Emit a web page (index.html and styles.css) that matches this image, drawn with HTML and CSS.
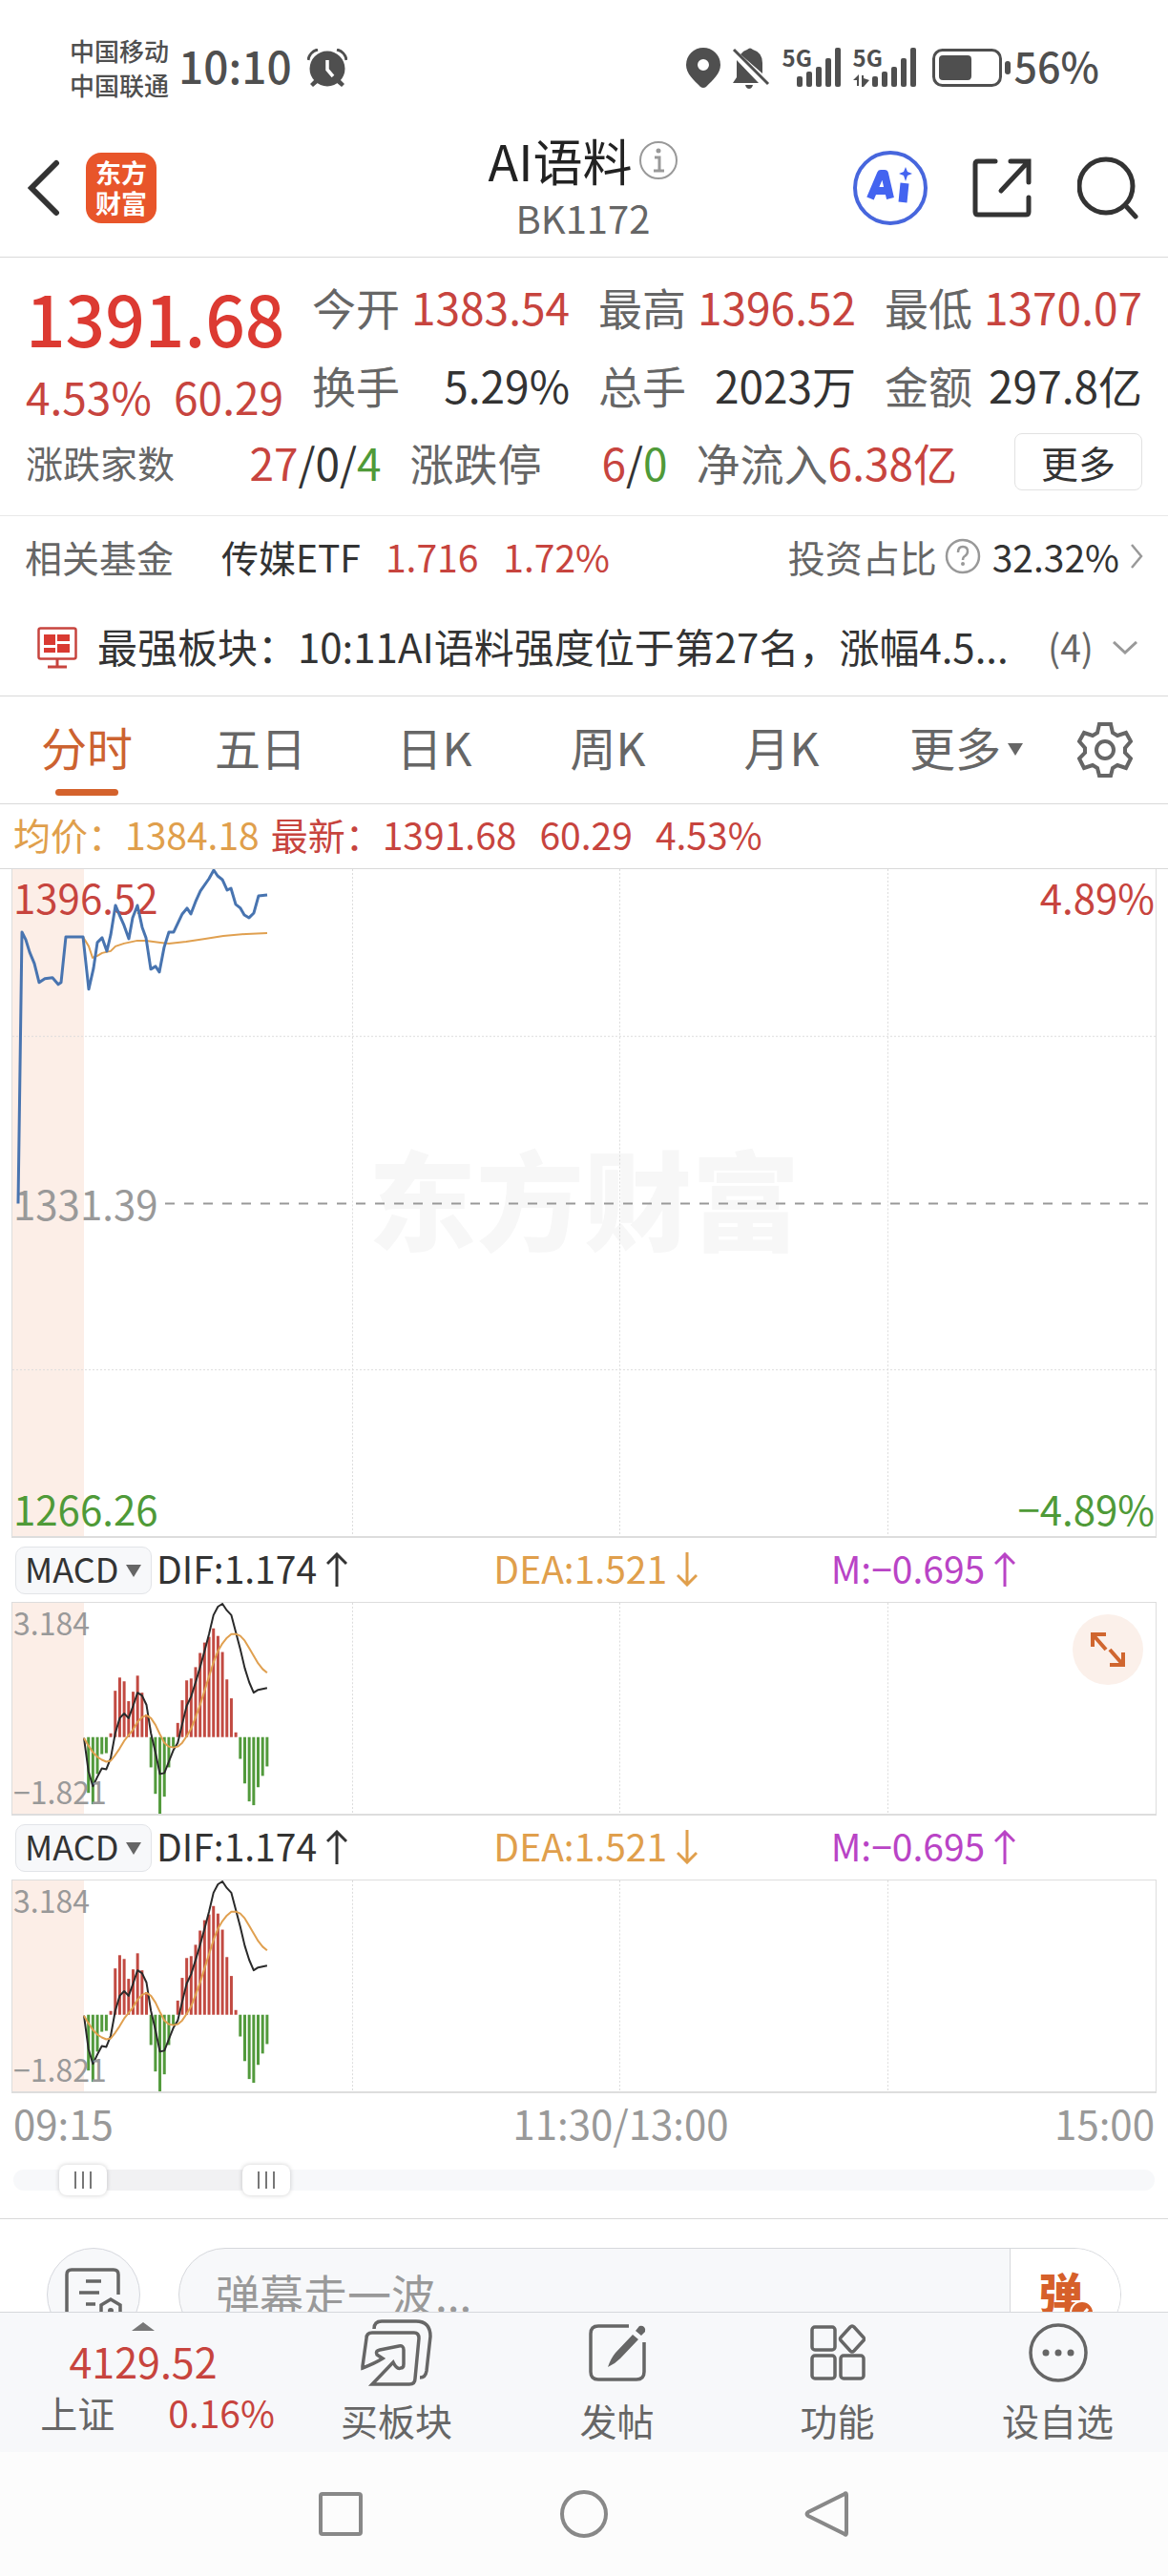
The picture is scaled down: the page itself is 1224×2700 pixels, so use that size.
FILE: index.html
```
<!DOCTYPE html>
<html lang="zh-CN">
<head>
  <meta charset="UTF-8" />
  <meta name="viewport" content="width=device-width, initial-scale=1.0"/>
  <title>AI语料 BK1172</title>
  <link rel="stylesheet" href="styles.css">
</head>
<body>
  <div class="status-bar">
    <div class="carriers">
      <span>中国移动</span>
      <span>中国联通</span>
    </div>
    <span class="clock">10:10</span>
    <svg class="alarm" width="42" height="40" viewBox="0 0 42 40" fill="#4f4f4f">
      <path d="M8 32l-5 5 3 3 6-5zM34 32l5 5-3 3-6-5z"/>
      <circle cx="21" cy="21" r="18.500"/>
      <path d="M1 12A13 13 0 0 1 11 1M41 12A13 13 0 0 0 31 1" fill="none" stroke="#4f4f4f" stroke-width="3"/>
      <path d="M21 12v10l6 7" fill="none" stroke="#fff" stroke-width="3.500"/>
    </svg>
    <div class="status-icons">
      <svg width="36" height="42" viewBox="0 0 36 42" fill="#4f4f4f">
        <path fill-rule="evenodd" d="M18 0a18 18 0 0 1 18 18c0 9-8 16-15 23q-3 2-6 0C8 34 0 27 0 18A18 18 0 0 1 18 0zM18 12a6 6 0 1 0 0 12 6 6 0 0 0 0-12z"/>
      </svg>
      <svg class="bell" width="40" height="43" viewBox="0 0 40 43" fill="#4f4f4f">
        <path d="M5 13L28 37H1l4-6zM9 7q3-4 7-5 3-3 6 0 10 3 10 14v11z"/>
        <path d="M2 2L38 38" stroke="#4f4f4f" stroke-width="3"/>
        <path d="M14 39h8q-1 4-4 4t-4-4z"/>
      </svg>
      <span class="signal">
        <b>5G</b>
        <svg width="62" height="42" viewBox="0 0 62 42" fill="#4f4f4f">
          <rect x="15" y="30" width="6" height="11" rx="2"/><rect x="25" y="25" width="6" height="16" rx="2"/><rect x="35" y="20" width="6" height="21" rx="2"/><rect x="45" y="11" width="6" height="30" rx="2"/><rect x="55" y="0" width="6" height="41" rx="2"/>
        </svg>
      </span>
      <span class="signal">
        <b>5G</b>
        <svg width="67" height="42" viewBox="0 0 67 42" fill="#4f4f4f">
          <path d="M6 28v12H4v-6H0zM9 29h2v3l6 2-6 7H9z"/>
          <rect x="20" y="30" width="6" height="11" rx="2"/><rect x="30" y="25" width="6" height="16" rx="2"/><rect x="40" y="20" width="6" height="21" rx="2"/><rect x="50" y="11" width="6" height="30" rx="2"/><rect x="60" y="0" width="6" height="41" rx="2"/>
        </svg>
      </span>
      <svg class="battery" width="82" height="40" viewBox="0 0 82 40" fill="#4f4f4f">
        <rect x="1.500" y="1.500" width="70" height="37" rx="9" fill="none" stroke="#4f4f4f" stroke-width="3"/>
        <rect x="7" y="7" width="34" height="26" rx="4"/>
        <rect x="76" y="13" width="6" height="14" rx="3"/>
      </svg>
      <span class="percent">56%</span>
    </div>
  </div>

  <header class="header">
    <div class="header-side">
      <button class="icon-btn" aria-label="返回">
        <svg width="34" height="60" viewBox="0 0 34 60" fill="none" stroke="#333" stroke-width="6" stroke-linecap="round"><path d="M30 4L4 30l26 26"/></svg>
      </button>
      <a class="logo" href="#"><span>东方</span><span>财富</span></a>
    </div>
    <div class="title">
      <h1>AI语料
        <svg width="40" height="40" viewBox="0 0 40 40" fill="none" stroke="#999" stroke-width="2"><circle cx="20" cy="20" r="19"/><path d="M16 17h5v14M15 31h11" stroke-width="3"/><circle cx="20" cy="10" r="2.500" fill="#999" stroke="none"/></svg>
      </h1>
      <div class="code">BK1172</div>
    </div>
    <div class="header-side header-actions">
      <button class="icon-btn" aria-label="AI">
        <svg width="80" height="80" viewBox="0 0 80 80"><circle cx="40" cy="40" r="37" fill="none" stroke="#4766dd" stroke-width="4"/><g fill="none" stroke="#4464f0"><path d="M19 51L30 25h4l6 26M25 43h12" stroke-width="8" stroke-linejoin="round"/><path d="M55 35l-2 20" stroke-width="9"/></g><path d="M56 18l2 5 5 2-5 2-2 6-2-6-5-2 5-2z" fill="#4464f0"/></svg>
      </button>
      <button class="icon-btn" aria-label="分享">
        <svg width="64" height="64" viewBox="0 0 64 64" fill="none" stroke="#333" stroke-width="5" stroke-linecap="round"><path d="M24 4H6q-3 0-3 3v50q0 3 3 3h50q3 0 3-3V42M40 4h19v22M58 5L30 35"/></svg>
      </button>
      <button class="icon-btn" aria-label="搜索">
        <svg width="64" height="66" viewBox="0 0 64 66" fill="none" stroke="#333" stroke-width="5" stroke-linecap="round"><circle cx="30" cy="31" r="28"/><path d="M50 51l11 12"/></svg>
      </button>
    </div>
  </header>

  <section class="quote">
    <div class="quote-grid">
      <div class="price">
        <strong>1391.68</strong>
        <div class="change"><span>4.53%</span><span>60.29</span></div>
      </div>
      <div class="stat"><span>今开</span><b class="up">1383.54</b></div>
      <div class="stat"><span>最高</span><b class="up">1396.52</b></div>
      <div class="stat"><span>最低</span><b class="up">1370.07</b></div>
      <div class="stat"><span>换手</span><b>5.29%</b></div>
      <div class="stat"><span>总手</span><b>2023万</b></div>
      <div class="stat"><span>金额</span><b>297.8亿</b></div>
    </div>
    <div class="quote-row">
      <div class="stat wide"><span class="small">涨跌家数</span><b><i class="up">27</i>/0/<i class="down">4</i></b></div>
      <div class="stat"><span>涨跌停</span><b><i class="up">6</i>/<i class="down">0</i></b></div>
      <div class="stat"><span>净流入</span><b class="up">6.38亿</b></div>
      <button class="more-btn">更多</button>
    </div>
  </section>

  <section class="fund">
    <span class="muted">相关基金</span>
    <span class="fund-name">传媒ETF</span>
    <span class="up">1.716</span>
    <span class="up">1.72%</span>
    <a class="ratio" href="#">
      <span class="muted">投资占比</span>
      <svg width="38" height="38" viewBox="0 0 38 38" fill="none" stroke="#999" stroke-width="2.500"><circle cx="19" cy="19" r="17"/><path d="M14 15q0-6 5-6t5 5q0 3-3 5-2 1-2 4"/><circle cx="19" cy="27" r="2" fill="#999" stroke="none"/></svg>
      <span>32.32%</span>
      <svg width="13" height="26" viewBox="0 0 13 26" fill="none" stroke="#999" stroke-width="2.500"><path d="M1 1l10 12L1 25"/></svg>
    </a>
  </section>

  <section class="news">
    <svg width="42" height="44" viewBox="0 0 42 44" fill="none" stroke="#c7443e" stroke-width="2.500"><rect x="1.500" y="1.500" width="39" height="32" rx="2"/><path d="M21 34v7M11 42h20" stroke-width="3"/><path d="M7 8h12v11H7zM21 8h13v7H21zM7 22h12v5H7zM21 18h13v9H21z" fill="#d93a32" stroke="none"/></svg>
    <a class="news-text" href="#">最强板块：10:11AI语料强度位于第27名，涨幅4.5...</a>
    <span class="count">(4)</span>
    <svg width="26" height="14" viewBox="0 0 26 14" fill="none" stroke="#999" stroke-width="3"><path d="M1 1l12 11L25 1"/></svg>
  </section>

  <nav class="tabs">
    <button class="active">分时</button>
    <button>五日</button>
    <button>日K</button>
    <button>周K</button>
    <button>月K</button>
    <button class="has-menu">更多</button>
    <button class="settings" aria-label="设置">
      <svg width="58" height="58" viewBox="0 0 58 58" fill="none" stroke="#666" stroke-width="4"><path d="M23 2h12l2 9 5 3 9-3 5 9-6 7v5l6 6-5 10-9-3-5 3-2 8H23l-2-8-5-3-9 3-5-10 6-6v-5l-6-7 5-9 9 3 5-3z"/><circle cx="29" cy="29" r="9"/></svg>
    </button>
  </nav>

  <div class="legend">
    <span class="avg">均价：1384.18</span>
    <span class="up">最新：1391.68</span>
    <span class="up">60.29</span>
    <span class="up">4.53%</span>
  </div>

  <div class="chart chart-price">
    <div class="watermark">东方财富</div>
    <div class="labels">
      <div><span class="up">1396.52</span><span class="up">4.89%</span></div>
      <div class="mid"><span>1331.39</span></div>
      <div><span class="down">1266.26</span><span class="down">−4.89%</span></div>
    </div>
    <svg id="price" viewBox="0 0 1198 700" preserveAspectRatio="none"></svg>
  </div>

  <div class="indicator">
    <label class="picker"><select aria-label="指标一"><option>MACD</option></select></label>
    <span class="dif">DIF:1.174<svg width="22" height="36" viewBox="0 0 22 36"><path d="M11 36V2M1 12L11 2l10 10"/></svg></span>
    <span class="dea">DEA:1.521<svg width="22" height="36" viewBox="0 0 22 36"><path d="M11 0v34M1 24l10 10 10-10"/></svg></span>
    <span class="m">M:−0.695<svg width="22" height="36" viewBox="0 0 22 36"><path d="M11 36V2M1 12L11 2l10 10"/></svg></span>
  </div>
  <div class="chart chart-macd">
    <svg class="macd" viewBox="0 0 1198 223" preserveAspectRatio="none"></svg>
    <div class="labels"><div><span>3.184</span></div><div><span>−1.821</span></div></div>
    <button class="expand" aria-label="全屏">
      <svg width="40" height="40" viewBox="0 0 40 40" fill="none" stroke="#d0662f" stroke-width="4"><path d="M4 17V4h14M4 4l14 16M36 23v13H22M36 36L22 20"/></svg>
    </button>
  </div>

  <div class="indicator">
    <label class="picker"><select aria-label="指标二"><option>MACD</option></select></label>
    <span class="dif">DIF:1.174<svg width="22" height="36" viewBox="0 0 22 36"><path d="M11 36V2M1 12L11 2l10 10"/></svg></span>
    <span class="dea">DEA:1.521<svg width="22" height="36" viewBox="0 0 22 36"><path d="M11 0v34M1 24l10 10 10-10"/></svg></span>
    <span class="m">M:−0.695<svg width="22" height="36" viewBox="0 0 22 36"><path d="M11 36V2M1 12L11 2l10 10"/></svg></span>
  </div>
  <div class="chart chart-macd">
    <svg class="macd" viewBox="0 0 1198 223" preserveAspectRatio="none"></svg>
    <div class="labels"><div><span>3.184</span></div><div><span>−1.821</span></div></div>
  </div>

  <div class="axis"><span>09:15</span><span>11:30/13:00</span><span>15:00</span></div>

  <div class="range">
    <input type="range" min="0" max="1000" value="42" aria-label="开始时间">
    <input type="range" min="0" max="1000" value="209" aria-label="结束时间">
  </div>

  <form class="barrage">
    <button type="button" class="round" aria-label="弹幕设置">
      <svg width="60" height="56" viewBox="0 0 60 56" fill="none" stroke="#666" stroke-width="3.500"><path d="M32 53H7q-5 0-5-5V7q0-5 5-5h44q5 0 5 5v21M22 14h16M15 26h21M22 38h10"/><path d="M38 55V39l10-6 10 6v16"/><circle cx="48" cy="45" r="3" fill="#666" stroke="none"/></svg>
    </button>
    <div class="barrage-box">
      <input type="text" placeholder="弹幕走一波..." aria-label="弹幕">
      <button type="button" class="send">弹
        <svg width="26" height="26" viewBox="0 0 26 26"><circle cx="13" cy="13" r="12" fill="#d6602a" stroke="#fff" stroke-width="2"/><path d="M7 13l4 5 8-9" fill="none" stroke="#fff" stroke-width="3"/></svg>
      </button>
    </div>
  </form>

  <footer class="footer">
    <div class="toolbar">
      <a class="index" href="#">
        <svg width="24" height="9" viewBox="0 0 24 9" fill="#777"><path d="M12 0l12 9H0z"/></svg>
        <span class="index-value">4129.52</span>
        <span class="index-row"><span>上证</span><span class="up">0.16%</span></span>
      </a>
      <button>
        <svg width="76" height="70" viewBox="0 0 76 70" fill="none" stroke="#666" stroke-width="3.500"><path d="M14 10q0-8 8-8h36q15 0 15 16l-4 36q-1 7-7 7"/><path d="M2 49L6 20q0-6 6-6h44q5 0 5 6l-4 42q0 6-6 6H12l22-23q4 8 8 6 3 0 3-4V32q0-5-5-4l-20 4q-5 1-3 5l6 4q-8 5-21 10z"/></svg>
        买板块
      </button>
      <button>
        <svg width="60" height="70" viewBox="0 0 60 70" fill="none" stroke="#666" stroke-width="3.500"><path d="M42 7H10q-8 0-8 8v40q0 8 8 8h40q8 0 8-8V24"/><path d="M20 50q3-9 8-15l18-19 6 5-19 20q-6 6-13 9zM49 12l4-5q3-1 5 1t1 5l-4 4z" fill="#666" stroke="none"/></svg>
        发帖
      </button>
      <button>
        <svg width="58" height="70" viewBox="0 0 58 70" fill="none" stroke="#666" stroke-width="3.500"><rect x="2" y="8" width="24" height="24" rx="3"/><rect x="2" y="38" width="24" height="24" rx="3"/><rect x="32" y="38" width="24" height="24" rx="3"/><path d="M42 8q2-2 4 0l10 11q1 2 0 3L46 33q-2 2-4 0L32 22q-1-2 0-3z"/></svg>
        功能
      </button>
      <button>
        <svg width="62" height="70" viewBox="0 0 62 70" fill="none" stroke="#666" stroke-width="3.500"><circle cx="31" cy="35" r="29"/><g fill="#666" stroke="none"><circle cx="18" cy="35" r="3.500"/><circle cx="31" cy="35" r="3.500"/><circle cx="44" cy="35" r="3.500"/></g></svg>
        设自选
      </button>
    </div>
    <div class="system-nav">
      <button aria-label="最近任务"><svg width="52" height="52" viewBox="0 0 52 52"><rect x="5" y="5" width="42" height="42" rx="2"/></svg></button>
      <button aria-label="主页"><svg width="52" height="52" viewBox="0 0 52 52"><circle cx="26" cy="26" r="23"/></svg></button>
      <button aria-label="后退"><svg width="52" height="52" viewBox="0 0 52 52"><path d="M44 5Q46 3 46 6v40q0 3-2 1L6 28q-3-2 0-4z"/></svg></button>
    </div>
  </footer>

  <script src="charts.js"></script>
</body>
</html>
```
FILE: styles.css
```
* {
  box-sizing: border-box;
}

html, body {
  margin: 0;
  padding: 0;
}

body {
  font-family: "Noto Sans CJK SC", "Noto Sans", sans-serif;
  font-size: 39px;
  color: #333;
  background: #fff;
  padding-bottom: 277px;
}

button, input, select {
  font-family: inherit;
  font-size: inherit;
  color: inherit;
  background: none;
  border: none;
  margin: 0;
  padding: 0;
}

a {
  color: inherit;
  text-decoration: none;
}

svg {
  display: block;
  flex-shrink: 0;
}

b, i {
  font-weight: 400;
  font-style: normal;
}

.up {
  color: #c7443e;
}

.down {
  color: #4f9a38;
}

.muted {
  color: #666;
}

/* status bar */
.status-bar {
  display: flex;
  align-items: center;
  height: 125px;
  padding: 17px 72px 0 73px;
  color: #4f4f4f;
  font-weight: 500;
}

.carriers {
  display: flex;
  flex-direction: column;
  font-size: 26px;
  line-height: 36px;
  margin-right: 10px;
}

.clock, .percent {
  font-size: 46px;
  line-height: 48px;
  padding-bottom: 6px;
}

.percent {
  font-size: 43px;
}

.alarm {
  margin-left: 16px;
}

.status-icons {
  display: flex;
  align-items: center;
  margin-left: auto;
}

.bell {
  margin: 0 13px 0 12px;
}

.signal {
  display: grid;
  margin-right: 12px;
}

.signal > * {
  grid-area: 1 / 1;
}

.signal b {
  font-size: 24px;
  line-height: 20px;
  font-weight: 700;
}

.battery {
  margin: 0 4px;
}

/* header */
.header {
  display: flex;
  align-items: center;
  height: 145px;
  padding: 0 31px 0 29px;
  border-bottom: 1px solid #d9d9d9;
}

.header-side {
  flex: 1;
  display: flex;
  align-items: center;
  gap: 27px;
}

.header-actions {
  justify-content: flex-end;
  gap: 46px;
}

.logo {
  display: flex;
  flex-direction: column;
  justify-content: center;
  align-items: center;
  width: 74px;
  height: 74px;
  border-radius: 16px;
  background: #e8552a;
  color: #fff;
  font-size: 27px;
  line-height: 32px;
  font-weight: 700;
}

.title {
  text-align: center;
}

.title h1 {
  display: flex;
  align-items: center;
  gap: 8px;
  margin: 0;
  font-size: 52px;
  line-height: 62px;
  font-weight: 400;
  color: #222;
}

.code {
  font-size: 40px;
  line-height: 58px;
  color: #666;
}

/* quote */
.quote {
  padding: 10px 27px 16px;
  font-size: 46px;
  border-bottom: 1px solid #e8e8e8;
}

.quote-grid {
  display: grid;
  grid-template-columns: repeat(4, minmax(0, 1fr));
  grid-auto-rows: 82px;
  column-gap: 30px;
}

.price {
  grid-row: span 2;
  padding-top: 10px;
  color: #c7443e;
}

.price strong {
  display: block;
  font-size: 73px;
  line-height: 84px;
  font-weight: 500;
  color: #dc3a32;
  text-align: right;
}

.change {
  display: flex;
  justify-content: space-between;
  line-height: 58px;
  padding-top: 12px;
}

.stat {
  display: flex;
  justify-content: space-between;
  align-items: center;
  white-space: nowrap;
}

.stat > span {
  color: #666;
}

.stat .small {
  font-size: 39px;
}

.quote-row {
  display: flex;
  align-items: center;
  gap: 30px;
  height: 80px;
}

.quote-row .stat {
  flex: 271;
}

.quote-row .wide {
  flex: 374;
}

.more-btn {
  width: 134px;
  height: 60px;
  margin-left: 30px;
  border: 1px solid #e2e2e2;
  border-radius: 8px;
  font-size: 39px;
  line-height: 52px;
}

/* fund */
.fund {
  display: flex;
  align-items: center;
  gap: 26px;
  height: 88px;
  padding: 0 26px 5px;
}

.fund-name {
  margin-left: 24px;
}

.ratio {
  display: flex;
  align-items: center;
  gap: 12px;
  margin-left: auto;
}

.ratio .muted {
  margin-right: -4px;
}

/* news */
.news {
  display: flex;
  align-items: center;
  height: 101px;
  padding: 0 32px 0 39px;
  border-bottom: 1px solid #d9d9d9;
}

.news-text {
  flex: 1;
  margin-left: 21px;
  padding-bottom: 5px;
  font-size: 42px;
  white-space: nowrap;
}

.count {
  margin-right: 20px;
  padding-bottom: 5px;
  color: #666;
}

/* tabs */
.tabs {
  display: flex;
  height: 113px;
  border-bottom: 1px solid #d9d9d9;
  color: #666;
  font-size: 48px;
}

.tabs button {
  position: relative;
  flex: 182;
  padding-bottom: 8px;
}

.tabs .settings {
  display: flex;
  flex: 132;
  align-items: center;
  justify-content: center;
  padding-bottom: 0;
}

.tabs .active {
  color: #cc6230;
}

.tabs .active::after {
  content: "";
  position: absolute;
  left: 50%;
  bottom: 8px;
  width: 66px;
  margin-left: -33px;
  height: 7px;
  border-radius: 4px;
  background: #d4622c;
}

.has-menu::after {
  content: "";
  position: absolute;
  left: 146px;
  top: 49px;
  border: 8px solid transparent;
  border-top: 13px solid #666;
  border-bottom: 0;
}

.legend {
  display: flex;
  align-items: center;
  gap: 24px;
  height: 68px;
  padding: 0 0 5px 14px;
  border-bottom: 1px solid #d9d9d9;
}

.avg {
  color: #e09f4c;
  margin-right: -12px;
}

/* charts */
.chart {
  display: grid;
  grid-template: 100% / 100%;
  margin: 0 12px;
  border: solid #ddd;
  border-width: 0 1px 2px;
  background: linear-gradient(#fceee7, #fceee7) 0 0 / 75px 100% no-repeat;
}

.chart > * {
  grid-area: 1 / 1;
}

.chart > svg {
  width: 100%;
  height: 100%;
}

.chart-price {
  height: 701px;
  font-size: 42px;
}

.chart-macd {
  height: 224px;
  border-top-width: 1px;
  font-size: 32px;
  color: #999;
}

.labels {
  display: flex;
  flex-direction: column;
  justify-content: space-between;
  padding: 0 1px;
  line-height: 58px;
}

.labels > div {
  display: flex;
  justify-content: space-between;
}

.chart-price .mid {
  color: #999;
}

.chart-macd .labels {
  padding-bottom: 4px;
  line-height: 40px;
}

.watermark {
  place-self: center;
  padding-bottom: 16px;
  font-size: 113px;
  line-height: 120px;
  font-weight: 900;
  color: #f7f7f7;
}

.grid {
  stroke: #dcdcdc;
  stroke-dasharray: 2 2;
}

.zero {
  stroke: #999;
  stroke-width: 2;
  stroke-dasharray: 10 10;
}

.line {
  fill: none;
  stroke-width: 2;
  stroke-linejoin: round;
}

.line-price {
  stroke: #4874b0;
  stroke-width: 3;
}

.line-avg {
  stroke: #e0a050;
}

.line-dif {
  stroke: #2a2a2a;
}

.bar-up {
  stroke: #c24a42;
  stroke-width: 3;
}

.bar-down {
  stroke: #529a3c;
  stroke-width: 3;
}

.indicator {
  display: grid;
  grid-template-columns: 148px 353fr 353fr 353fr;
  align-items: center;
  height: 67px;
  padding-left: 16px;
}

.indicator > span {
  display: flex;
  align-items: center;
  gap: 10px;
  padding-bottom: 5px;
}

.indicator svg {
  fill: none;
  stroke: currentColor;
  stroke-width: 3;
  margin-top: 4px;
}

.dea {
  color: #e09f4c;
}

.m {
  color: #b944c6;
}

.picker {
  position: relative;
  width: 143px;
}

.picker select {
  appearance: none;
  display: block;
  width: 100%;
  height: 50px;
  padding: 0 0 6px 9px;
  border: 1px solid #e2e4e8;
  border-radius: 10px;
  background: #f7f8fa;
  font-size: 36px;
  line-height: 42px;
}

.picker::after {
  content: "";
  position: absolute;
  right: 11px;
  top: 19px;
  border: 8px solid transparent;
  border-top: 13px solid #666;
  border-bottom: 0;
}

.expand {
  display: flex;
  align-items: center;
  justify-content: center;
  justify-self: end;
  width: 74px;
  height: 74px;
  margin: 12px 13px;
  border-radius: 50%;
  background: #fbf0ea;
}

/* the midday label sits under the middle grid line */
.axis {
  display: grid;
  grid-template-columns: 403fr 467fr 326fr;
  padding: 0 14px 4px;
  font-size: 42px;
  line-height: 62px;
  color: #999;
}

.axis span:nth-child(2) {
  text-align: center;
}

.axis span:last-child {
  text-align: right;
}

/* time range */
.range {
  display: grid;
  align-items: center;
  height: 66px;
  padding: 0 14px 16px;
  border-bottom: 1px solid #d9d9d9;
}

.range::before {
  content: "";
  grid-area: 1 / 1;
  height: 22px;
  border-radius: 11px;
  background: linear-gradient(#f1f1f3, #f1f1f3) 74px 0 / 192px 100% no-repeat #f7f8fa;
}

.range input {
  grid-area: 1 / 1;
  appearance: none;
  width: 100%;
  height: 32px;
  pointer-events: none;
}

.range input::-webkit-slider-thumb {
  appearance: none;
  pointer-events: auto;
  width: 50px;
  height: 32px;
  border-radius: 8px;
  background:
    linear-gradient(#777, #777) 16px 7px / 2px 18px no-repeat,
    linear-gradient(#777, #777) 24px 7px / 2px 18px no-repeat,
    linear-gradient(#777, #777) 32px 7px / 2px 18px no-repeat,
    #fff;
  box-shadow: 0 0 5px rgba(0, 0, 0, 0.2);
}

/* barrage */
.barrage {
  display: flex;
  gap: 40px;
  padding: 30px 49px 0;
}

.round {
  display: flex;
  align-items: center;
  justify-content: center;
  width: 98px;
  height: 98px;
  border: 1px solid #d6d8de;
  border-radius: 50%;
  background: #f7f8fa;
}

.barrage-box {
  display: flex;
  flex: 1;
  height: 98px;
  border: 1px solid #d6d8dc;
  border-radius: 49px;
  background: #f7f8fa;
  overflow: hidden;
}

.barrage-box input {
  flex: 1;
  padding: 0 0 4px 38px;
  font-size: 46px;
}

.barrage-box input::placeholder {
  color: #999;
}

.send {
  position: relative;
  width: 116px;
  padding: 0 10px 8px 0;
  border-left: 1px solid #d6d8dc;
  background: #fff;
  color: #d6602a;
  font-size: 46px;
  font-weight: 900;
}

.send svg {
  position: absolute;
  left: 62px;
  top: 54px;
}

/* footer */
.footer {
  position: fixed;
  left: 0;
  right: 0;
  bottom: 0;
  color: #666;
}

.toolbar {
  display: grid;
  grid-template-columns: 300fr repeat(4, 231fr);
  height: 147px;
  border-top: 1px solid #d6d8dc;
  background: #f7f8fa;
}

.toolbar button {
  display: flex;
  flex-direction: column;
  align-items: center;
  padding-top: 7px;
  line-height: 70px;
}

.index {
  display: flex;
  flex-direction: column;
  align-items: center;
  padding-top: 10px;
}

.index-value {
  color: #c7443e;
  font-size: 43px;
  line-height: 62px;
}

.index-row {
  display: flex;
  gap: 56px;
  padding-left: 30px;
  line-height: 46px;
}

.system-nav {
  display: flex;
  justify-content: center;
  gap: 203px;
  height: 130px;
  background: #fcfcfc;
}

.system-nav svg {
  fill: none;
  stroke: #888;
  stroke-width: 4;
}
```
FILE: charts.js
```
const STEP = 4.68;
const START = 75;
const ZERO = 142;

const price = [
  [6, 351], [10, 66], [14, 74], [18, 87], [23, 99], [28, 119], [34, 115], [42, 114], [48, 121], [51, 119],
  [56, 71], [74, 71], [80, 126], [85, 104], [89, 77], [94, 72], [99, 86], [103, 69], [108, 38], [113, 50],
  [117, 59], [122, 73], [126, 51], [131, 38], [136, 61], [140, 72], [145, 105], [150, 102], [154, 108],
  [159, 82], [164, 66], [169, 66], [178, 47], [183, 41], [187, 47], [192, 34], [197, 23], [206, 10],
  [211, 1], [215, 7], [220, 11], [225, 22], [229, 20], [234, 37], [239, 41], [243, 48], [248, 51],
  [253, 46], [258, 28], [267, 27]
];

const avg = [
  [74, 71], [80, 81], [84, 93], [89, 91], [94, 88], [103, 86], [108, 81], [117, 78], [131, 75], [140, 75],
  [155, 77], [164, 78], [182, 76], [202, 73], [221, 70], [245, 68], [267, 67]
];

const bars = [
  -59, -71, -39, -18, -17, 4, 49, 63, 59, 38, 48, 65, 47, 24, -32, -60, -81, -63, -32, -11, 15, 39, 60, 62,
  74, 89, 100, 106, 115, 107, 90, 61, 41, 5, -23, -49, -68, -72, -53, -41, -31
];

const dif = [
  143, 178, 194, 184, 175, 176, 164, 138, 122, 117, 122, 109, 95, 98, 108, 138, 158, 181, 180, 168, 156,
  148, 128, 109, 99, 84, 68, 51, 33, 13, 4, 1, 8, 13, 31, 49, 69, 84, 95, 92, 91, 90
];

const dea = [
  143, 151, 158, 163, 166, 168, 167, 161, 154, 146, 140, 134, 126, 121, 119, 122, 129, 139, 148, 152, 153,
  152, 148, 141, 133, 121, 108, 93, 78, 63, 51, 43, 37, 33, 33, 35, 40, 48, 56, 64, 70, 74
];

const line = (points, cls) => `<polyline class="line ${cls}" points="${points.join(' ')}"/>`;
const series = values => values.map((y, i) => [START + i * STEP, y]);
const columns = height => `<path class="grid" d="M356.500 0V${height}M636.500 0V${height}M917.500 0V${height}"/>`;

document.getElementById('price').innerHTML =
  columns(700) +
  '<path class="grid" d="M0 175.500H1198M0 525.500H1198"/>' +
  '<path class="zero" d="M160 351H1198"/>' +
  line(avg, 'line-avg') +
  line(price, 'line-price');

document.querySelectorAll('.macd').forEach(svg => {
  const rects = bars.map((v, i) => {
    const x = START + (i + 1) * STEP;
    return `<path class="${v > 0 ? 'bar-up' : 'bar-down'}" d="M${x} ${ZERO}V${ZERO - v}"/>`;
  }).join('');
  svg.innerHTML = columns(223) + rects + line(series(dif), 'line-dif') + line(series(dea), 'line-avg');
});
```
